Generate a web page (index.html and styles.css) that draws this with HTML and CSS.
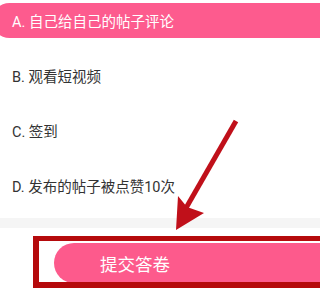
FILE: index.html
```html
<!DOCTYPE html>
<html lang="zh">
<head>
<meta charset="utf-8">
<link rel="stylesheet" href="styles.css">
</head>
<body>
<div class="page">
  <ul class="options">
    <li class="option selected">A. 自己给自己的帖子评论</li>
    <li class="option">B. 观看短视频</li>
    <li class="option">C. 签到</li>
    <li class="option">D. 发布的帖子被点赞10次</li>
  </ul>
  <div class="divider"></div>
  <div class="footer">
    <button class="submit">提交答卷</button>
  </div>
  <div class="highlight"></div>
  <svg class="arrow" width="240" height="288" viewBox="0 0 240 288">
    <line x1="236" y1="121" x2="186" y2="208" stroke="#c0101a" stroke-width="5"/>
    <polygon points="176,230 178,196 187,207 204,213" fill="#c0101a"/>
  </svg>
</div>
</body>
</html>
```
FILE: styles.css
```css
html, body {
  margin: 0;
  padding: 0;
  background: #fff;
  overflow: hidden;
}
.page {
  position: relative;
  min-width: 225px;
  height: 288px;
  overflow: hidden;
  font-family: Roboto, "Noto Sans CJK SC", sans-serif;
}
.options {
  list-style: none;
  margin: 0;
  padding: 3px 0 0 0;
  display: flex;
  flex-direction: column;
  gap: 20px;
}
.option {
  height: 35px;
  line-height: 39px;
  font-size: 14.5px;
  color: #333;
  padding-left: 12px;
  white-space: nowrap;
}
.option.selected {
  background: #fd5b8e;
  color: #fff;
  margin-left: -8px;
  padding-left: 20px;
  margin-right: -40px;
  border-radius: 18px;
}
.divider {
  margin-top: 15px;
  height: 10px;
  background: #f5f5f5;
}
.footer {
  padding-top: 15px;
  padding-left: 54px;
}
.submit {
  display: block;
  width: 600px;
  height: 40px;
  border: none;
  border-radius: 20px;
  background: #fd5a8c;
  color: #fff;
  font-family: Roboto, "Noto Sans CJK SC", sans-serif;
  font-size: 17.5px;
  text-align: left;
  padding: 0 0 0 46px;
  margin: 0;
}
.highlight {
  position: absolute;
  left: 33px;
  top: 236px;
  width: 700px;
  height: 52px;
  box-sizing: border-box;
  border: 5px solid #b50a0c;
  border-left-width: 6px;
  border-bottom-width: 6px;
}
.arrow {
  position: absolute;
  left: 0;
  top: 0;
}
```
